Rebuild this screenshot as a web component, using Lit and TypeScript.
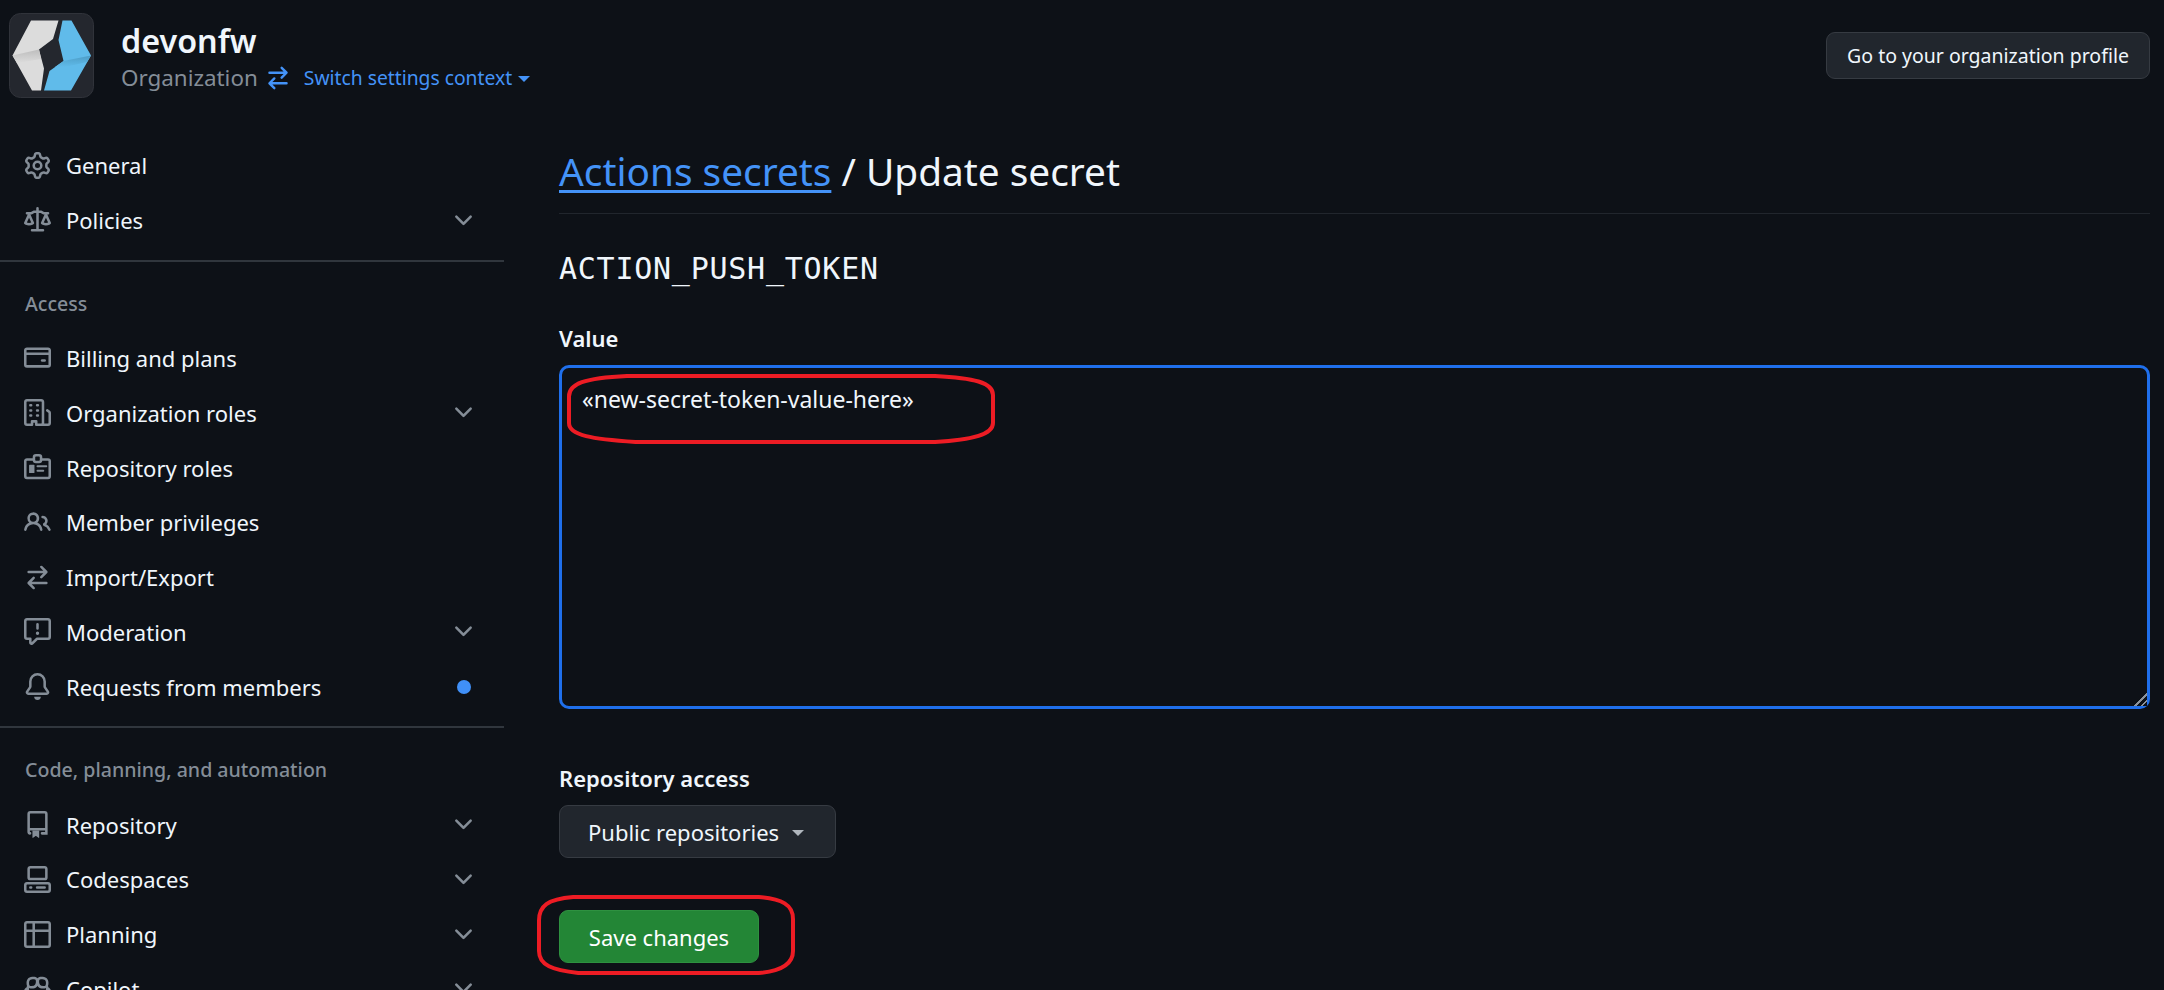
import { LitElement, html, css, svg } from 'lit';
import { customElement } from 'lit/decorators.js';

const icons: Record<string, any> = {
  gear: svg`<path d="M8 0a8.2 8.2 0 0 1 .701.031C9.444.095 9.99.645 10.16 1.29l.288 1.107c.018.066.079.158.212.224.231.114.454.243.668.386.123.082.233.09.299.071l1.103-.303c.644-.176 1.392.021 1.82.63.27.385.506.792.704 1.218.315.675.111 1.422-.364 1.891l-.814.806c-.049.048-.098.147-.088.294.016.257.016.515 0 .772-.01.147.038.246.088.294l.814.806c.475.469.679 1.216.364 1.891a7.977 7.977 0 0 1-.704 1.217c-.428.61-1.176.807-1.82.63l-1.102-.302c-.067-.019-.177-.011-.3.071a5.909 5.909 0 0 1-.668.386c-.133.066-.194.158-.211.224l-.29 1.106c-.168.646-.715 1.196-1.458 1.26a8.006 8.006 0 0 1-1.402 0c-.743-.064-1.289-.614-1.458-1.26l-.289-1.106c-.018-.066-.079-.158-.212-.224a5.738 5.738 0 0 1-.668-.386c-.123-.082-.233-.09-.299-.071l-1.103.303c-.644.176-1.392-.021-1.82-.63a8.12 8.12 0 0 1-.704-1.218c-.315-.675-.111-1.422.363-1.891l.815-.806c.05-.048.098-.147.088-.294a6.214 6.214 0 0 1 0-.772c.01-.147-.038-.246-.088-.294l-.815-.806C.635 6.045.431 5.298.746 4.623a7.92 7.92 0 0 1 .704-1.217c.428-.61 1.176-.807 1.82-.63l1.102.302c.067.019.177.011.3-.071.214-.143.437-.272.668-.386.133-.066.194-.158.211-.224l.29-1.106C6.009.645 6.556.095 7.299.03 7.53.01 7.764 0 8 0Zm-.571 1.525c-.036.003-.108.036-.137.146l-.289 1.105c-.147.561-.549.967-.998 1.189-.173.086-.34.183-.5.29-.417.278-.97.423-1.529.27l-1.103-.303c-.109-.03-.175.016-.195.045-.22.312-.412.644-.573.99-.014.031-.021.11.059.19l.815.806c.411.406.562.957.53 1.456a4.709 4.709 0 0 0 0 .582c.032.499-.119 1.05-.53 1.456l-.815.806c-.081.08-.073.159-.059.19.162.346.353.677.573.989.02.03.085.076.195.046l1.102-.303c.56-.153 1.113-.008 1.53.27.161.107.328.204.501.29.447.222.85.629.997 1.189l.289 1.105c.029.109.101.143.137.146a6.6 6.6 0 0 0 1.142 0c.036-.003.108-.036.137-.146l.289-1.105c.147-.561.549-.967.998-1.189.173-.086.34-.183.5-.29.417-.278.97-.423 1.529-.27l1.103.303c.109.029.175-.016.195-.045.22-.313.411-.644.573-.99.014-.031.021-.11-.059-.19l-.815-.806c-.411-.406-.562-.957-.53-1.456a4.709 4.709 0 0 0 0-.582c-.032-.499.119-1.05.53-1.456l.815-.806c.081-.08.073-.159.059-.19a6.464 6.464 0 0 0-.573-.989c-.02-.03-.085-.076-.195-.046l-1.102.303c-.56.153-1.113.008-1.53-.27a4.44 4.44 0 0 0-.501-.29c-.447-.222-.85-.629-.997-1.189l-.289-1.105c-.029-.11-.101-.143-.137-.146a6.6 6.6 0 0 0-1.142 0ZM11 8a3 3 0 1 1-6 0 3 3 0 0 1 6 0ZM9.5 8a1.5 1.5 0 1 0-3.001.001A1.5 1.5 0 0 0 9.5 8Z"/>`,
  law: svg`<path d="M8.75.75V2h.985c.304 0 .603.08.867.231l1.29.736c.038.022.08.033.124.033h2.234a.75.75 0 0 1 0 1.5h-.427l2.111 4.692a.75.75 0 0 1-.154.838l-.53-.53.529.531-.001.002-.002.002-.006.006-.006.005-.01.01-.045.04c-.21.176-.441.327-.686.45C14.556 10.78 13.88 11 13 11a4.498 4.498 0 0 1-2.023-.454 3.544 3.544 0 0 1-.686-.45l-.045-.04-.016-.015-.006-.006-.004-.004v-.001a.75.75 0 0 1-.154-.838L12.178 4.5h-.162c-.305 0-.604-.079-.868-.231l-1.29-.736a.245.245 0 0 0-.124-.033H8.75V13h2.5a.75.75 0 0 1 0 1.5h-6.5a.75.75 0 0 1 0-1.5h2.5V3.5h-.984a.245.245 0 0 0-.124.033l-1.289.737c-.265.15-.564.23-.869.23h-.162l2.112 4.692a.75.75 0 0 1-.154.838l-.53-.53.529.531-.001.002-.002.002-.006.006-.016.015-.045.04c-.21.176-.441.327-.686.45C4.556 10.78 3.88 11 3 11a4.498 4.498 0 0 1-2.023-.454 3.544 3.544 0 0 1-.686-.45l-.045-.04-.016-.015-.006-.006-.004-.004v-.001a.75.75 0 0 1-.154-.838L2.178 4.5H1.75a.75.75 0 0 1 0-1.5h2.234a.249.249 0 0 0 .125-.033l1.288-.737c.265-.15.564-.23.869-.23h.984V.75a.75.75 0 0 1 1.5 0Zm2.945 8.477c.285.135.718.273 1.305.273s1.02-.138 1.305-.273L13 6.327Zm-10 0c.285.135.718.273 1.305.273s1.02-.138 1.305-.273L3 6.327Z"/>`,
  card: svg`<path d="M10.75 9a.75.75 0 0 0 0 1.5h1.5a.75.75 0 0 0 0-1.5h-1.5Z"/><path d="M0 3.75C0 2.784.784 2 1.75 2h12.5c.966 0 1.75.784 1.75 1.75v8.5A1.75 1.75 0 0 1 14.25 14H1.75A1.75 1.75 0 0 1 0 12.25ZM14.5 6.5h-13v5.75c0 .138.112.25.25.25h12.5a.25.25 0 0 0 .25-.25Zm0-2.75a.25.25 0 0 0-.25-.25H1.75a.25.25 0 0 0-.25.25V5h13Z"/>`,
  org: svg`<path d="M1.75 16A1.75 1.75 0 0 1 0 14.25V1.75C0 .784.784 0 1.75 0h8.5C11.216 0 12 .784 12 1.75v12.5c0 .085-.006.168-.018.25h2.268a.25.25 0 0 0 .25-.25V8.285a.25.25 0 0 0-.111-.208l-1.055-.703a.749.749 0 1 1 .832-1.248l1.055.703c.487.325.779.871.779 1.456v5.965A1.75 1.75 0 0 1 14.25 16h-3.5a.766.766 0 0 1-.197-.026c-.099.017-.2.026-.303.026h-3a.75.75 0 0 1-.75-.75V14h-1v1.25a.75.75 0 0 1-.75.75Zm-.25-1.75c0 .138.112.25.25.25H4v-1.25a.75.75 0 0 1 .75-.75h2.5a.75.75 0 0 1 .75.75v1.25h2.25a.25.25 0 0 0 .25-.25V1.75a.25.25 0 0 0-.25-.25h-8.5a.25.25 0 0 0-.25.25ZM3.75 6h.5a.75.75 0 0 1 0 1.5h-.5a.75.75 0 0 1 0-1.5ZM3 3.75A.75.75 0 0 1 3.75 3h.5a.75.75 0 0 1 0 1.5h-.5A.75.75 0 0 1 3 3.75Zm4 3A.75.75 0 0 1 7.75 6h.5a.75.75 0 0 1 0 1.5h-.5A.75.75 0 0 1 7 6.75ZM7.75 3h.5a.75.75 0 0 1 0 1.5h-.5a.75.75 0 0 1 0-1.5ZM3 9.75A.75.75 0 0 1 3.75 9h.5a.75.75 0 0 1 0 1.5h-.5A.75.75 0 0 1 3 9.75ZM7.75 9h.5a.75.75 0 0 1 0 1.5h-.5a.75.75 0 0 1 0-1.5Z"/>`,
  badge: svg`<g fill="none" stroke="currentColor" stroke-width="1.5"><path d="M5.6 3.2H1.75a1 1 0 0 0-1 1v9a1 1 0 0 0 1 1h12.5a1 1 0 0 0 1-1v-9a1 1 0 0 0-1-1H10.4"/><rect x="5.9" y=".75" width="4.2" height="4" rx="1.2"/><path d="M8 7.3h5.2M8 9.9h3.4" stroke-width="1.2" stroke-linecap="round"/></g><rect x="3" y="6.4" width="3.2" height="4.9" rx=".4"/>`,
  people: svg`<path d="M2 5.5a3.5 3.5 0 1 1 5.898 2.549 5.508 5.508 0 0 1 3.034 4.084.75.75 0 1 1-1.482.235 4 4 0 0 0-7.9 0 .75.75 0 0 1-1.482-.236A5.507 5.507 0 0 1 3.102 8.05 3.493 3.493 0 0 1 2 5.5ZM11 4a3.001 3.001 0 0 1 2.22 5.018 5.01 5.01 0 0 1 2.56 3.012.749.749 0 0 1-.885.954.752.752 0 0 1-.549-.514 3.507 3.507 0 0 0-2.522-2.372.75.75 0 0 1-.574-.73v-.352a.75.75 0 0 1 .416-.672A1.5 1.5 0 0 0 11 5.5.75.75 0 0 1 11 4Zm-5.5-.5a2 2 0 1 0-.001 3.999A2 2 0 0 0 5.5 3.5Z"/>`,
  swap: svg`<path d="M5.22 14.78a.75.75 0 0 0 1.06-1.06L4.56 12h8.69a.75.75 0 0 0 0-1.5H4.56l1.72-1.72a.75.75 0 0 0-1.06-1.06l-3 3a.75.75 0 0 0 0 1.06l3 3Zm5.56-6.5a.75.75 0 1 1-1.06-1.06l1.72-1.72H2.75a.75.75 0 0 1 0-1.5h8.69L9.72 2.28a.75.75 0 0 1 1.06-1.06l3 3a.75.75 0 0 1 0 1.06l-3 3Z"/>`,
  report: svg`<path d="M0 1.75C0 .784.784 0 1.75 0h12.5C15.216 0 16 .784 16 1.75v9.5A1.75 1.75 0 0 1 14.25 13H8.06l-2.573 2.573A1.458 1.458 0 0 1 3 14.543V13H1.75A1.75 1.75 0 0 1 0 11.25Zm1.75-.25a.25.25 0 0 0-.25.25v9.5c0 .138.112.25.25.25h2a.75.75 0 0 1 .75.75v2.19l2.72-2.72a.749.749 0 0 1 .53-.22h6.5a.25.25 0 0 0 .25-.25v-9.5a.25.25 0 0 0-.25-.25Zm7 2.25v2.5a.75.75 0 0 1-1.5 0v-2.5a.75.75 0 0 1 1.5 0ZM9 9a1 1 0 1 1-2 0 1 1 0 0 1 2 0Z"/>`,
  bell: svg`<path d="M8 16a2 2 0 0 0 1.985-1.75c.017-.137-.097-.25-.235-.25h-3.5c-.138 0-.252.113-.235.25A2 2 0 0 0 8 16ZM3 5a5 5 0 0 1 10 0v2.947c0 .05.015.098.042.139l1.703 2.555A1.519 1.519 0 0 1 13.482 13H2.518a1.516 1.516 0 0 1-1.263-2.36l1.703-2.554A.255.255 0 0 0 3 7.947Zm5-3.5A3.5 3.5 0 0 0 4.5 5v2.947c0 .346-.102.683-.294.97l-1.703 2.556a.017.017 0 0 0-.003.01l.001.006c0 .002.002.004.004.006l.006.004.007.001h10.964l.007-.001.006-.004.004-.006.001-.007a.017.017 0 0 0-.003-.01l-1.703-2.554a1.745 1.745 0 0 1-.294-.97V5A3.5 3.5 0 0 0 8 1.5Z"/>`,
  repo: svg`<path fill="none" stroke="currentColor" stroke-width="1.5" stroke-linecap="round" d="M3.6 13.25h-.1a.75.75 0 0 1-.75-.75V1.75a1 1 0 0 1 1-1h8.5a1 1 0 0 1 1 1v11.5h-2.6M2.75 10.75h10.5"/><path d="M5 11.5h4v4.2a.25.25 0 0 1-.4.2L7.15 14.8a.249.249 0 0 0-.3 0L5.4 15.9a.25.25 0 0 1-.4-.2Z"/>`,
  codespaces: svg`<path d="M0 11.25c0-.966.784-1.75 1.75-1.75h12.5c.966 0 1.75.784 1.75 1.75v3A1.75 1.75 0 0 1 14.25 16H1.75A1.75 1.75 0 0 1 0 14.25Zm2-9.5C2 .784 2.784 0 3.75 0h8.5C13.216 0 14 .784 14 1.75v5a1.75 1.75 0 0 1-1.75 1.75h-8.5A1.75 1.75 0 0 1 2 6.75Zm1.75-.25a.25.25 0 0 0-.25.25v5c0 .138.112.25.25.25h8.5a.25.25 0 0 0 .25-.25v-5a.25.25 0 0 0-.25-.25Zm-2 9.5a.25.25 0 0 0-.25.25v3c0 .138.112.25.25.25h12.5a.25.25 0 0 0 .25-.25v-3a.25.25 0 0 0-.25-.25Z"/><path d="M7 12.75a.75.75 0 0 1 .75-.75h4.5a.75.75 0 0 1 0 1.5h-4.5a.75.75 0 0 1-.75-.75Zm-4 0a.75.75 0 0 1 .75-.75h.5a.75.75 0 0 1 0 1.5h-.5a.75.75 0 0 1-.75-.75Z"/>`,
  table: svg`<path d="M0 1.75C0 .784.784 0 1.75 0h12.5C15.216 0 16 .784 16 1.75v12.5A1.75 1.75 0 0 1 14.25 16H1.75A1.75 1.75 0 0 1 0 14.25ZM6.5 6.5v8h7.75a.25.25 0 0 0 .25-.25V6.5Zm8-1.5V1.75a.25.25 0 0 0-.25-.25H6.5V5Zm-13 1.5v7.75c0 .138.112.25.25.25H5v-8ZM5 5V1.5H1.75a.25.25 0 0 0-.25.25V5Z"/>`,
  copilot: svg`<path d="M7.998 15.035c-4.562 0-7.873-2.914-7.998-3.749V9.338c.085-.628.677-1.686 1.588-2.065.013-.07.024-.143.036-.218.029-.183.06-.384.126-.612-.201-.508-.254-1.084-.254-1.656 0-.87.128-1.769.693-2.484.579-.733 1.494-1.124 2.724-1.261 1.206-.134 2.262.034 2.944.765.05.053.096.108.139.165.044-.057.094-.112.143-.165.682-.731 1.738-.899 2.944-.765 1.23.137 2.145.528 2.724 1.261.566.715.693 1.614.693 2.484 0 .572-.053 1.148-.254 1.656.066.228.098.429.126.612.012.076.024.148.037.218.924.385 1.522 1.471 1.591 2.095v1.872c0 .766-3.351 3.795-8.002 3.795Zm0-1.485c2.28 0 4.584-1.11 5.002-1.433V7.862l-.023-.116c-.49.21-1.075.291-1.727.291-1.146 0-2.059-.327-2.71-.991A3.222 3.222 0 0 1 8 6.303a3.24 3.24 0 0 1-.544.743c-.65.664-1.563.991-2.71.991-.652 0-1.236-.081-1.727-.291l-.023.116v4.255c.419.323 2.722 1.433 5.002 1.433ZM6.762 2.83c-.193-.206-.637-.413-1.682-.297-1.019.113-1.479.404-1.713.7-.247.312-.369.789-.369 1.554 0 .793.129 1.171.308 1.371.162.181.519.379 1.442.379.853 0 1.339-.235 1.638-.54.315-.322.527-.827.617-1.553.117-.935-.037-1.395-.241-1.614Zm4.155-.297c-1.044-.116-1.488.091-1.681.297-.204.219-.359.679-.242 1.614.091.726.303 1.231.618 1.553.299.305.784.54 1.638.54.922 0 1.28-.198 1.442-.379.179-.2.308-.578.308-1.371 0-.765-.123-1.242-.37-1.554-.233-.296-.693-.587-1.713-.7Z"/><path d="M6.25 9.037a.75.75 0 0 1 .75.75v1.501a.75.75 0 0 1-1.5 0V9.787a.75.75 0 0 1 .75-.75Zm4.25.75v1.501a.75.75 0 0 1-1.5 0V9.787a.75.75 0 0 1 1.5 0Z"/>`,
  chevron: svg`<path d="M12.78 5.22a.749.749 0 0 1 0 1.06l-4.25 4.25a.749.749 0 0 1-1.06 0L3.22 6.28a.749.749 0 1 1 1.06-1.06L8 8.939l3.72-3.719a.749.749 0 0 1 1.06 0Z"/>`,
};

type NavItem = { label: string; icon: string; chevron?: boolean; dot?: boolean };

const topItems: NavItem[] = [
  { label: 'General', icon: 'gear' },
  { label: 'Policies', icon: 'law', chevron: true },
];
const accessItems: NavItem[] = [
  { label: 'Billing and plans', icon: 'card' },
  { label: 'Organization roles', icon: 'org', chevron: true },
  { label: 'Repository roles', icon: 'badge' },
  { label: 'Member privileges', icon: 'people' },
  { label: 'Import/Export', icon: 'swap' },
  { label: 'Moderation', icon: 'report', chevron: true },
  { label: 'Requests from members', icon: 'bell', dot: true },
];
const codeItems: NavItem[] = [
  { label: 'Repository', icon: 'repo', chevron: true },
  { label: 'Codespaces', icon: 'codespaces', chevron: true },
  { label: 'Planning', icon: 'table', chevron: true },
  { label: 'Copilot', icon: 'copilot', chevron: true },
];

@customElement('app-root')
export class AppRoot extends LitElement {
  static styles = css`
    :host {
      display: block;
      height: 990px;
      overflow: hidden;
      background: #0d1117;
      color: #f0f6fc;
      font-family: 'Noto Sans', 'Open Sans', sans-serif;
      font-size: 22px;
      color-scheme: dark;
    }
    svg.icon {
      width: 27px;
      height: 27px;
      fill: currentColor;
      flex: none;
    }
    .header {
      display: flex;
      align-items: flex-start;
      padding: 13px 14px 0 9px;
      height: 138px;
      box-sizing: border-box;
    }
    .avatar {
      width: 85px;
      height: 85px;
      flex: none;
      display: block;
    }
    .who {
      margin-left: 27px;
      padding-top: 6px;
    }
    .name {
      font-size: 32.3px;
      line-height: 42px;
      font-weight: 600;
    }
    .sub {
      display: flex;
      align-items: center;
      line-height: 34px;
    }
    .org {
      color: #848d97;
      font-size: 22.4px;
    }
    .switch {
      display: flex;
      align-items: center;
      color: #4493f8;
      font-size: 19.3px;
      margin-left: 7px;
    }
    .switch svg.icon {
      width: 26px;
      height: 26px;
      margin-right: 13px;
    }
    .caret {
      width: 0;
      height: 0;
      border-style: solid;
      border-width: 6px 6px 0;
      border-color: currentColor transparent transparent;
      margin-left: 6px;
      margin-top: 2px;
    }
    .btn {
      box-sizing: border-box;
      display: flex;
      align-items: center;
      background: #21262d;
      border: 1.5px solid #363b42;
      border-radius: 9px;
      color: #f0f6fc;
      font: inherit;
    }
    .profile {
      margin-left: auto;
      margin-top: 19px;
      height: 47px;
      width: 324px;
      justify-content: center;
      font-size: 19.5px;
    }
    .body {
      display: flex;
    }
    .side {
      width: 504px;
      flex: none;
    }
    .row {
      display: flex;
      align-items: center;
      height: 54.8px;
      padding-left: 24px;
      padding-right: 27px;
    }
    .row .label {
      margin-left: 15px;
      flex: 1;
    }
    .row svg.icon {
      color: #848d97;
    }
    .dot {
      width: 14px;
      height: 14px;
      border-radius: 50%;
      background: #4090f8;
      margin-right: 6px;
    }
    .sep {
      height: 2px;
      background: #30363d;
      margin: 12px 0 0;
    }
    .group {
      color: #848d97;
      font-size: 19.6px;
      font-weight: 500;
      padding-left: 25px;
      line-height: 26px;
      margin: 29px 0 14px;
    }
    .main {
      flex: 1;
      margin: 0 14px 0 55px;
    }
    h1 {
      margin: 0;
      font-size: 38.8px;
      font-weight: 400;
      line-height: 56px;
      padding: 5px 0 14px;
      border-bottom: 1px solid #21262d;
    }
    h1 a {
      color: #4493f8;
      text-decoration: underline;
      text-underline-offset: 4px;
    }
    .secret {
      font-family: 'DejaVu Sans Mono', 'Liberation Mono', monospace;
      font-size: 30px;
      letter-spacing: 0.75px;
      line-height: 40px;
      margin-top: 35px;
    }
    .label-strong {
      font-weight: 600;
      font-size: 22px;
      line-height: 28px;
    }
    .value-label {
      margin-top: 35px;
    }
    .field {
      position: relative;
      margin-top: 13px;
    }
    textarea {
      display: block;
      box-sizing: border-box;
      width: 100%;
      height: 344px;
      background: #0d1117;
      color: #f0f6fc;
      border: 3px solid #1f6feb;
      border-radius: 10px;
      outline: none;
      padding: 17px 20px;
      font: inherit;
      font-size: 23px;
      line-height: 28px;
      resize: vertical;
    }
    textarea::-webkit-resizer {
      width: 22px;
      height: 22px;
      background:
        linear-gradient(135deg, #0d1117 50%, transparent 50%),
        repeating-linear-gradient(135deg, #0d1117 0 3px, #8b929a 3px 4.5px);
    }
    .mark {
      position: absolute;
      fill: none;
      stroke: #ed1c24;
      stroke-width: 4;
      overflow: visible;
    }
    .mark-value {
      left: 8px;
      top: 9px;
      width: 428px;
      height: 70px;
    }
    .mark-save {
      left: -22px;
      top: -15px;
      width: 258px;
      height: 80px;
    }
    .access {
      margin-top: 55px;
    }
    .select {
      margin-top: 13px;
      width: 277px;
      height: 53px;
      padding-left: 28px;
    }
    .select .caret {
      color: #b0b6bd;
      margin-left: 13px;
      margin-top: 3px;
    }
    .save-wrap {
      position: relative;
      margin-top: 52px;
      width: 200px;
    }
    .save {
      width: 200px;
      height: 53px;
      justify-content: center;
      background: #238636;
      border-color: #2e9140;
      color: #fff;
    }
  `;

  private icon(name: string) {
    return html`<svg class="icon" viewBox="0 0 16 16">${icons[name]}</svg>`;
  }

  private row(item: NavItem) {
    return html`<div class="row">
      ${this.icon(item.icon)}
      <span class="label">${item.label}</span>
      ${item.chevron ? this.icon('chevron') : ''}
      ${item.dot ? html`<span class="dot"></span>` : ''}
    </div>`;
  }

  private logo() {
    return html`<svg class="avatar" viewBox="0 0 85 85">
      <defs>
        <linearGradient id="fold-g" x1="0" y1="0" x2="0" y2="1">
          <stop offset="0" stop-color="#bdbdbd" />
          <stop offset="1" stop-color="#dcdcdc" />
        </linearGradient>
        <linearGradient id="fold-b" x1="0" y1="0" x2="0" y2="1">
          <stop offset="0" stop-color="#4d9dc6" />
          <stop offset="1" stop-color="#60bbea" />
        </linearGradient>
      </defs>
      <rect x=".5" y=".5" width="84" height="84" rx="11" fill="#24272e" stroke="#30333a" />
      <polygon points="22,7.5 49.5,7.5 44,26 30,36.5 35,55.5 32,77.5 23,77.5 3.5,42.5" fill="#dcdcdc" />
      <polygon points="3.5,42.5 30,36.5 32,46 8,50" fill="url(#fold-g)" />
      <polygon points="53.5,7.5 62.5,7.5 82,42.5 62,77.5 35,77.5 40.5,58 54.5,48 49.5,27" fill="#60bbea" />
      <polygon points="54.5,48 82,42.5 78,49 56,54 46,54" fill="url(#fold-b)" />
    </svg>`;
  }

  private ellipse(cls: string, w: number, h: number) {
    return html`<svg class="mark ${cls}" viewBox="0 0 ${w} ${h}">
      <path d="M${w * 0.14} 2 C${w * 0.04} 4 2 ${h * 0.14} 2 ${h * 0.32} V${h * 0.7} C2 ${h * 0.88} ${w * 0.06} ${h - 5} ${w * 0.16} ${h - 2}
        H${w * 0.86} C${w * 0.95} ${h - 4} ${w - 2} ${h * 0.86} ${w - 2} ${h * 0.7} V${h * 0.3} C${w - 2} ${h * 0.12} ${w * 0.95} 4 ${w * 0.86} 2 Z" />
    </svg>`;
  }

  render() {
    return html`
      <div class="header">
        ${this.logo()}
        <div class="who">
          <div class="name">devonfw</div>
          <div class="sub">
            <span class="org">Organization</span>
            <span class="switch">${this.icon('swap')}Switch settings context<span class="caret"></span></span>
          </div>
        </div>
        <button class="btn profile">Go to your organization profile</button>
      </div>
      <div class="body">
        <nav class="side">
          ${topItems.map((i) => this.row(i))}
          <div class="sep"></div>
          <div class="group">Access</div>
          ${accessItems.map((i) => this.row(i))}
          <div class="sep"></div>
          <div class="group">Code, planning, and automation</div>
          ${codeItems.map((i) => this.row(i))}
        </nav>
        <main class="main">
          <h1><a>Actions secrets</a> / Update secret</h1>
          <div class="secret">ACTION_PUSH_TOKEN</div>
          <div class="label-strong value-label">Value</div>
          <div class="field">
            <textarea spellcheck="false">«new-secret-token-value-here»</textarea>
            ${this.ellipse('mark-value', 428, 70)}
          </div>
          <div class="label-strong access">Repository access</div>
          <button class="btn select">Public repositories<span class="caret"></span></button>
          <div class="save-wrap">
            <button class="btn save">Save changes</button>
            ${this.ellipse('mark-save', 258, 80)}
          </div>
        </main>
      </div>
    `;
  }
}
